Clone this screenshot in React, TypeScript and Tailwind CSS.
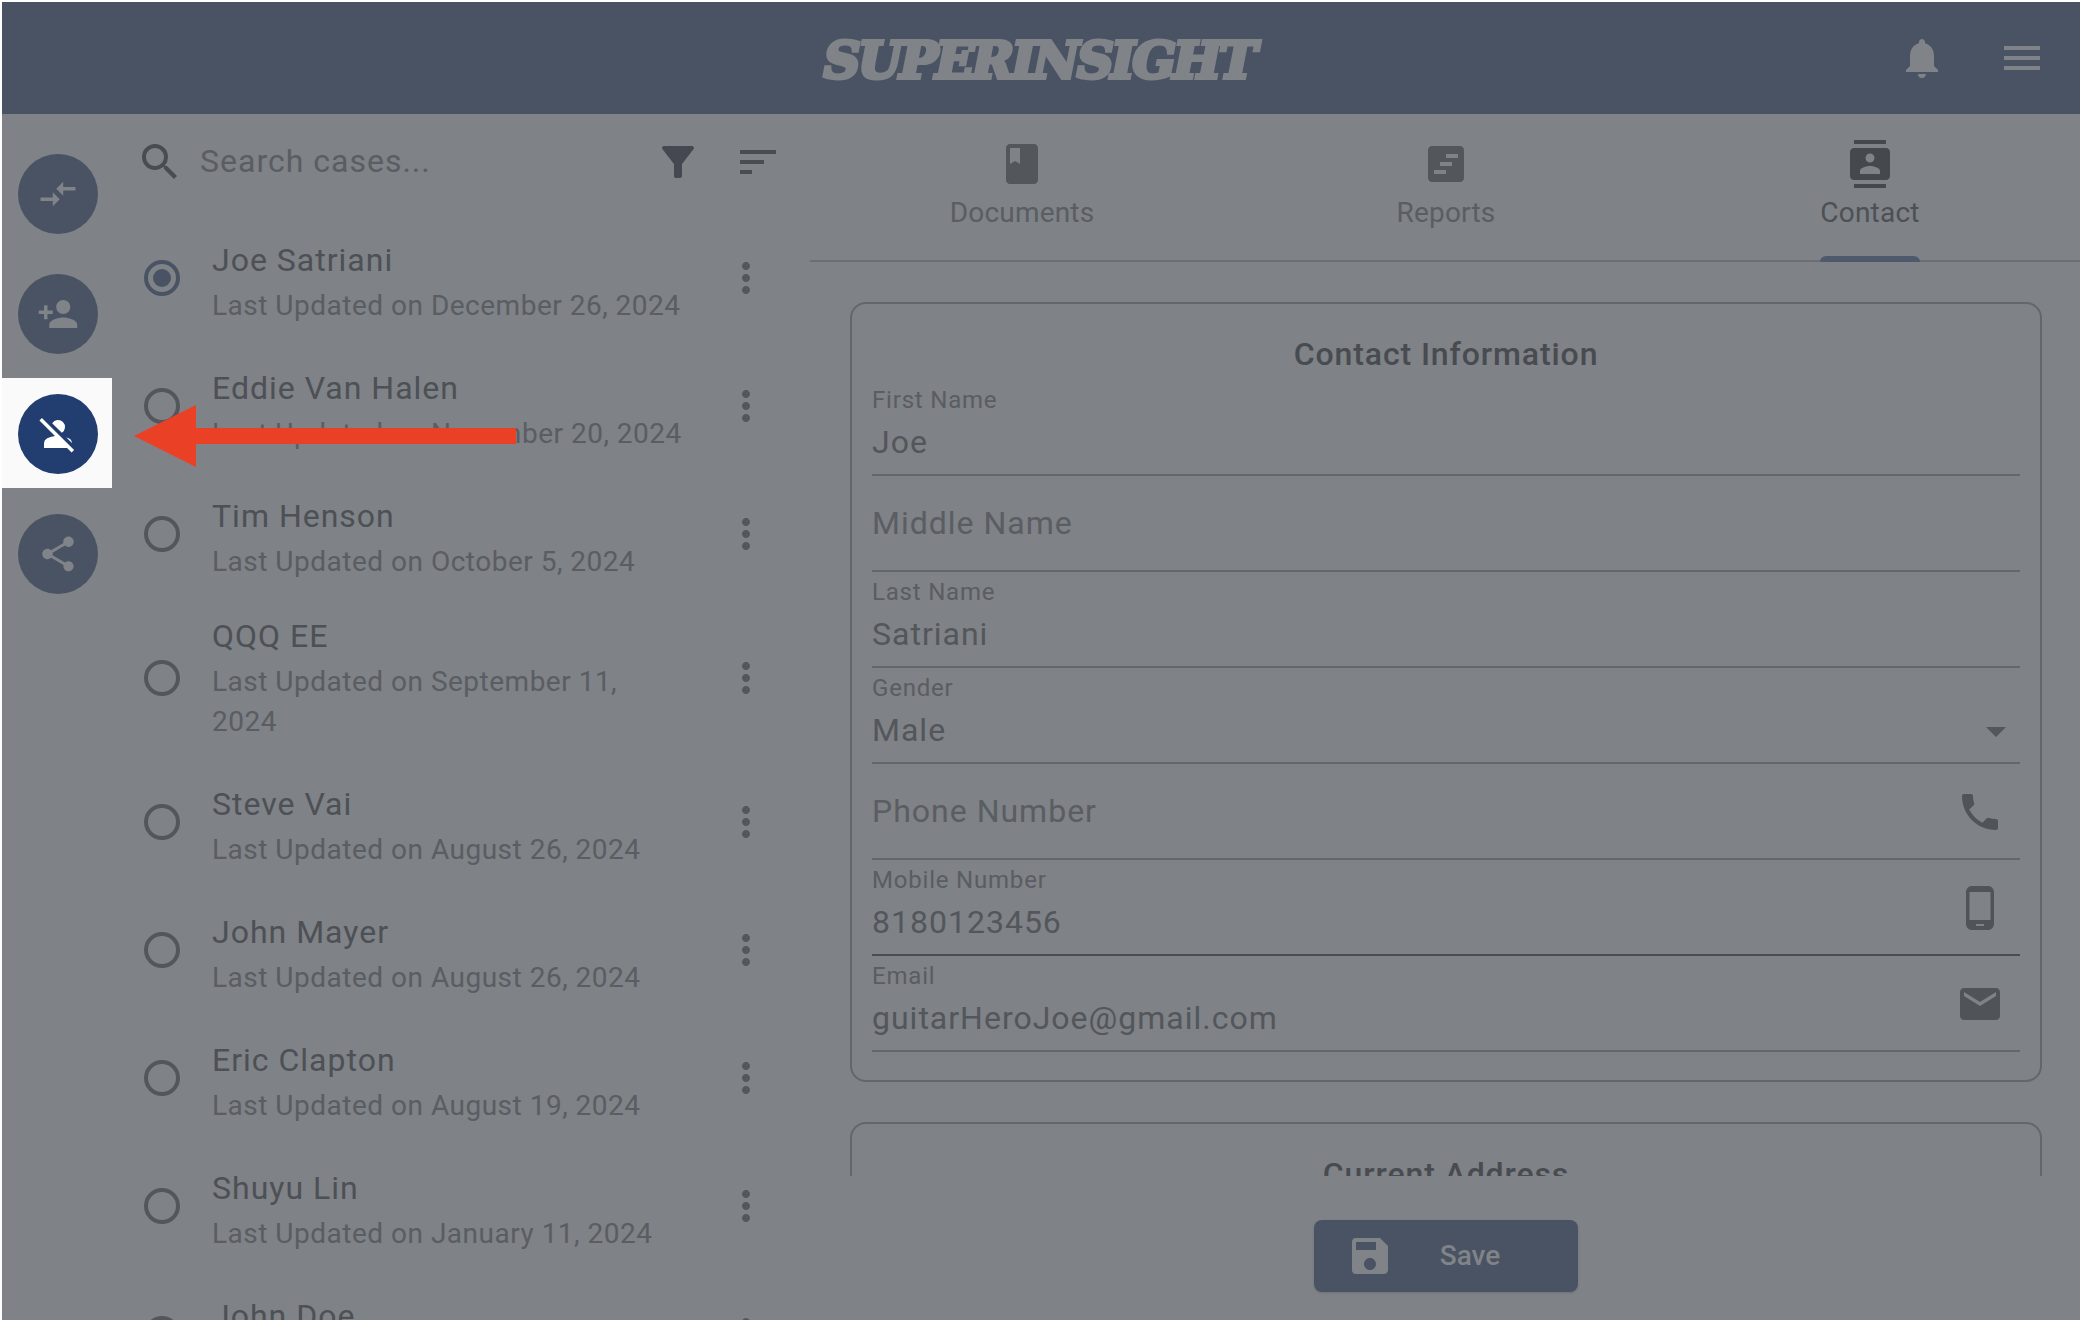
import React from "react";
import {
  MdArrowDropDown, MdBook, MdCompareArrows, MdContacts, MdEmail, MdFilterAlt, MdMenu, MdMoreVert,
  MdNotifications, MdPersonAddAlt1, MdPersonOff, MdPhone, MdPhoneAndroid, MdSave, MdSearch, MdShare, MdSort,
} from "react-icons/md";

const cases = [
  { name: "Joe Satriani", date: "December 26, 2024", selected: true },
  { name: "Eddie Van Halen", date: "November 20, 2024" },
  { name: "Tim Henson", date: "October 5, 2024" },
  { name: "QQQ EE", date: "September 11, 2024", tall: true },
  { name: "Steve Vai", date: "August 26, 2024" },
  { name: "John Mayer", date: "August 26, 2024" },
  { name: "Eric Clapton", date: "August 19, 2024" },
  { name: "Shuyu Lin", date: "January 11, 2024" },
  { name: "John Doe", date: "" },
];

type FieldProps = { label: string; value?: string; icon?: React.ReactNode; dark?: boolean };

function Field({ label, value, icon, dark }: FieldProps) {
  return (
    <div className={`flex h-24 items-center justify-between border-b-2 ${dark ? "border-[#494c51]" : "border-[#63666b]"}`}>
      {value ? (
        <div className="flex h-full flex-col">
          <span className="pt-1 text-[24px] leading-8 tracking-[0.8px] text-[#5a5d62]">{label}</span>
          <span className="pt-1.5 text-[32px] leading-10 tracking-[1px] text-[#53565b]">{value}</span>
        </div>
      ) : (
        <span className="text-[32px] leading-10 tracking-[1px] text-[#5a5d62]">{label}</span>
      )}
      {icon}
    </div>
  );
}

function Fab({ children, active }: { children: React.ReactNode; active?: boolean }) {
  return (
    <div className={`w-[110px] pl-4 ${active ? "-mt-4 mb-[26px] h-[110px] bg-[#fafafa] pt-4 text-white" : "h-[120px] text-[#808387]"}`}>
      <div className={`flex size-20 items-center justify-center rounded-full ${active ? "bg-[#223d6f]" : "bg-[#4a5363]"}`}>
        {children}
      </div>
    </div>
  );
}

function ReportsIcon() {
  return (
    <svg width="48" height="48" viewBox="0 0 24 24" fill="currentColor">
      <path fillRule="evenodd" d="M19 3H5c-1.1 0-2 .9-2 2v14c0 1.1.9 2 2 2h14c1.1 0 2-.9 2-2V5c0-1.1-.9-2-2-2zm-7 14H6v-2h6v2zm3-4H9v-2h6v2zm3-4h-6V7h6v2z" />
    </svg>
  );
}

function Tab({ label, icon, active }: { label: string; icon: React.ReactNode; active?: boolean }) {
  return (
    <div className={`flex flex-1 flex-col items-center pt-[26px] ${active ? "text-[#45484d]" : "text-[#53565b]"}`}>
      {icon}
      <span className={`h-[72px] shrink-0 pt-[5px] text-[28px] leading-10 tracking-[0.2px] ${active ? "text-[#4d5055]" : "text-[#5a5d62]"}`}>
        {label}
      </span>
      {active && <div className="-mt-1 h-1.5 w-[100px] shrink-0 rounded-t-md bg-[#4e5a6b]" />}
    </div>
  );
}

export default function App() {
  return (
    <div className="h-[1322px] w-[2082px] bg-white p-0.5 font-['Roboto',sans-serif]">
      <div className="relative flex h-[1318px] w-[2078px] flex-col overflow-hidden bg-[#7f8286]">
        <header className="flex h-28 shrink-0 items-center justify-between bg-[#4a5363] px-[34px] text-[#808387]">
          <div className="w-[148px]" />
          <div className="mt-1 flex w-[440px] justify-center pr-1 font-['DejaVu_Serif',serif] text-[51px] font-bold italic leading-none tracking-[-2.6px] whitespace-nowrap [-webkit-text-stroke:4px_#808387]">
            SUPERINSIGHT
          </div>
          <div className="flex gap-[52px]">
            <MdNotifications size={48} />
            <MdMenu size={48} />
          </div>
        </header>

        <div className="flex min-h-0 flex-1">
          <nav className="w-[116px] shrink-0 pt-10">
            <Fab><MdCompareArrows size={42} /></Fab>
            <Fab><MdPersonAddAlt1 size={42} className="-scale-x-100" /></Fab>
            <Fab active><MdPersonOff size={42} /></Fab>
            <Fab><MdShare size={42} /></Fab>
          </nav>

          <aside className="flex w-[692px] shrink-0 flex-col overflow-hidden">
            <div className="flex h-[100px] shrink-0 items-center pr-7 pb-1 pl-[18px] text-[#494c51]">
              <MdSearch size={48} />
              <span className="ml-4 flex-1 pb-0.5 text-[32px] leading-10 tracking-[1px] text-[#5a5d62]">Search cases...</span>
              <MdFilterAlt size={48} className="text-[#454850]" />
              <MdSort size={48} className="ml-8" />
            </div>
            {cases.map((c) => (
              <div key={c.name} className={`flex shrink-0 items-center pl-[26px] ${c.tall ? "h-40" : "h-32"}`}>
                <div className={`flex size-9 items-center justify-center rounded-full border-4 ${c.selected ? "border-[#4a5363]" : "border-[#53565b]"}`}>
                  {c.selected && <div className="size-[18px] rounded-full bg-[#4a5363]" />}
                </div>
                <div className={`ml-8 w-[470px] ${c.tall ? "pb-px" : "pt-[7px]"}`}>
                  <div className="text-[32px] leading-[46px] tracking-[1px] text-[#4d5055]">{c.name}</div>
                  <div className="mt-[3px] min-h-10 text-[28px] leading-10 tracking-[0.5px] text-[#5a5d62]">
                    {c.date && `Last Updated on ${c.date}`}
                  </div>
                </div>
                <MdMoreVert size={48} className="ml-10 text-[#53565b]" />
              </div>
            ))}
          </aside>

          <main className="-mr-0.5 flex min-w-0 flex-1 flex-col">
            <div className="flex h-[148px] shrink-0 border-b-2 border-[#6b6e73]">
              <Tab label="Documents" icon={<MdBook size={48} className="shrink-0" />} />
              <Tab label="Reports" icon={<ReportsIcon />} />
              <Tab label="Contact" active icon={<MdContacts size={48} className="shrink-0" />} />
            </div>
            <div className="flex h-[914px] shrink-0 flex-col gap-10 overflow-hidden px-10 pt-10">
              <section className="h-[780px] shrink-0 rounded-2xl border-2 border-[#63666b] px-5 pt-[30px]">
                <h2 className="h-[46px] text-center text-[32px] font-medium leading-10 tracking-[0.9px] text-[#484b50]">Contact Information</h2>
                <Field label="First Name" value="Joe" />
                <Field label="Middle Name" />
                <Field label="Last Name" value="Satriani" />
                <Field label="Gender" value="Male" icon={<MdArrowDropDown size={48} className="mt-8 text-[#53565b]" />} />
                <Field label="Phone Number" icon={<MdPhone size={48} className="mt-0.5 mr-4 text-[#505358]" />} />
                <Field label="Mobile Number" value="8180123456" dark icon={<MdPhoneAndroid size={48} className="mt-0.5 mr-4 text-[#505358]" />} />
                <Field label="Email" value="guitarHeroJoe@gmail.com" icon={<MdEmail size={48} className="mt-0.5 mr-4 text-[#505358]" />} />
              </section>
              <section className="h-[780px] shrink-0 rounded-2xl border-2 border-[#63666b] px-5 pt-[30px]">
                <h2 className="text-center text-[32px] font-medium leading-10 tracking-[0.9px] text-[#484b50]">Current Address</h2>
              </section>
            </div>
            <div className="flex flex-1 items-start justify-center pt-11">
              <button className="flex h-[72px] w-[264px] items-center rounded-lg bg-[#4a5363] pl-8 text-[#808387] shadow-sm">
                <MdSave size={48} />
                <span className="flex-1 pr-8 text-center text-[28px] font-medium">Save</span>
              </button>
            </div>
          </main>
        </div>

        <svg className="absolute top-[403px] left-[130px]" width="388" height="64" viewBox="0 0 388 64" fill="#ea4025">
          <path d="M2 31 64 0v23h320v16H64v23z" />
        </svg>
      </div>
    </div>
  );
}
